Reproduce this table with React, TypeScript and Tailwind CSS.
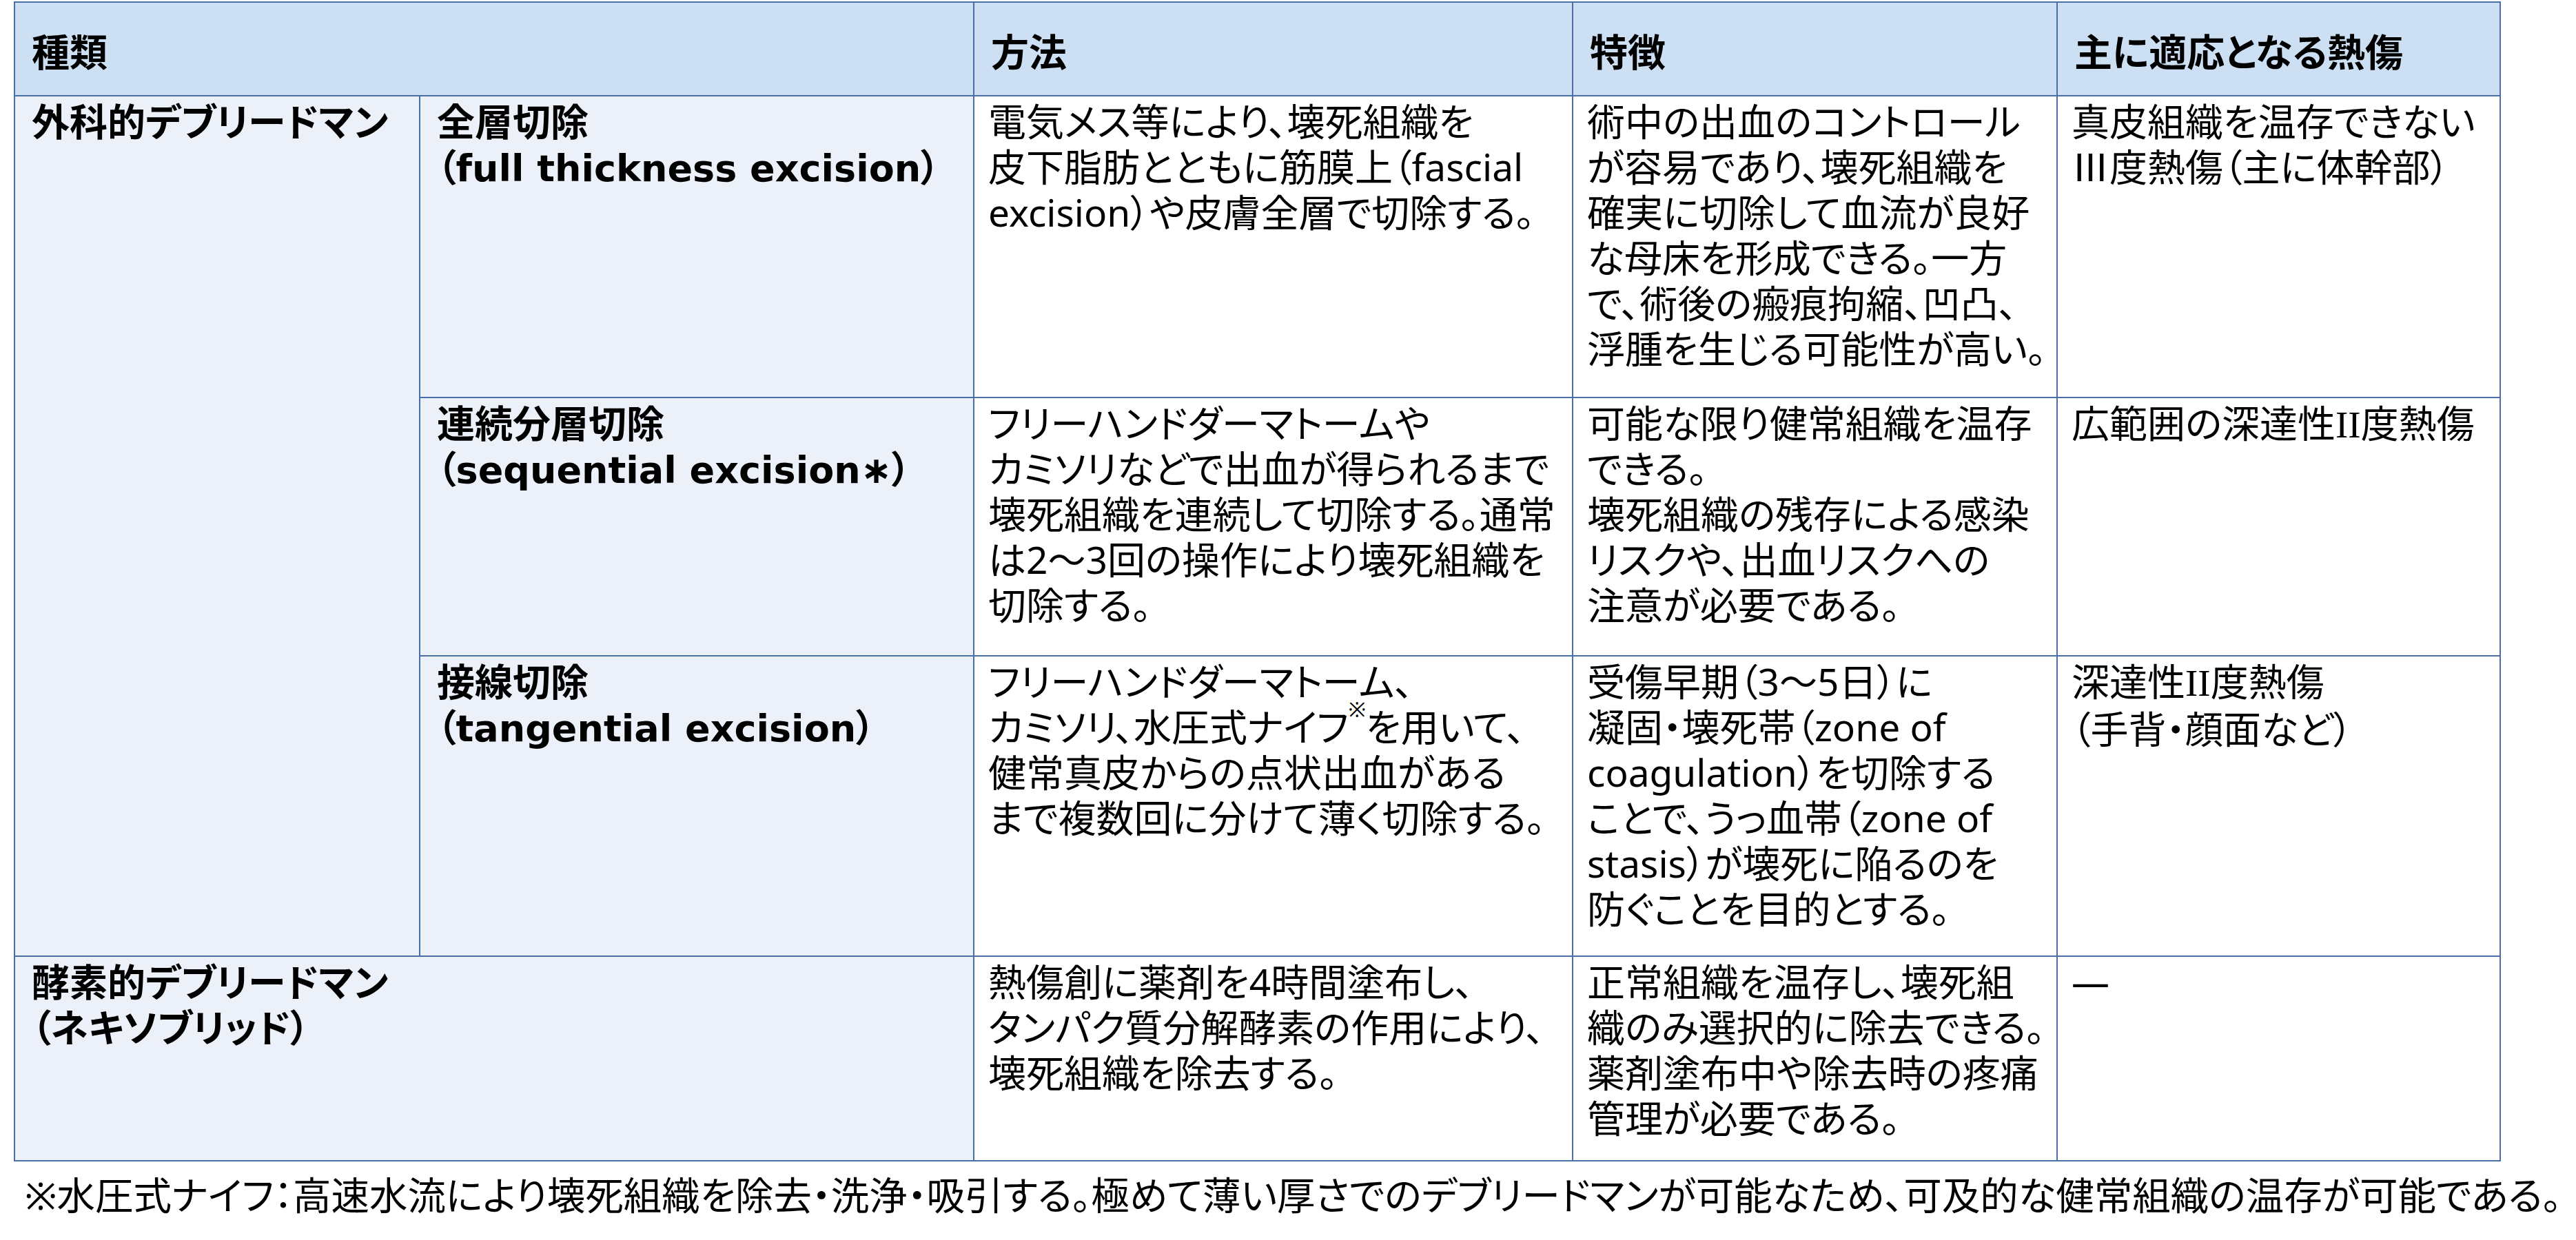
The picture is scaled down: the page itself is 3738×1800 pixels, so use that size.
import React from "react";

const B = "border-2 border-[#4a6ea8]";
const head = `${B} bg-[#cddff3] text-left align-middle font-bold pl-6 pt-[8px]`;
const side = `${B} bg-[#ebf0f9] align-top font-bold pl-6 pt-[3px]`;
const cell = `${B} bg-white align-top pl-5 pr-2 pt-[3px]`;

function Lines({ rows }: { rows: React.ReactNode[] }) {
  return (
    <>
      {rows.map((r, i) => (
        <div key={i} className="whitespace-nowrap">
          {r}
        </div>
      ))}
    </>
  );
}

const Roman2 = () => <span className="font-['Liberation_Serif',serif]">II</span>;
const Wide = ({ children }: { children: React.ReactNode }) => (
  <span className="font-['DejaVu_Sans','Noto_Sans_CJK_JP',sans-serif] text-[54px]">{children}</span>
);

export default function App() {
  return (
    <div className="w-[3738px] h-[1800px] bg-white text-black font-['Noto_Sans','Noto_Sans_CJK_JP',sans-serif] text-[55px] leading-[66px] [font-feature-settings:'palt'] pt-[2px]">
      <table className="ml-[20px] table-fixed border-collapse w-[3607px]">
        <colgroup>
          <col className="w-[588px]" />
          <col className="w-[804px]" />
          <col className="w-[869px]" />
          <col className="w-[703px]" />
          <col className="w-[643px]" />
        </colgroup>
        <thead>
          <tr className="h-[136px]">
            <th colSpan={2} className={head}>種類</th>
            <th className={head}>方法</th>
            <th className={head}>特徴</th>
            <th className={head}>主に適応となる熱傷</th>
          </tr>
        </thead>
        <tbody>
          <tr className="h-[438px]">
            <td rowSpan={3} className={side}>
              <Lines rows={["外科的デブリードマン"]} />
            </td>
            <td className={side}>
              <Lines rows={["全層切除", <>（<Wide>full thickness excision</Wide>）</>]} />
            </td>
            <td className={cell}>
              <Lines
                rows={[
                  "電気メス等により、壊死組織を",
                  "皮下脂肪とともに筋膜上（fascial",
                  "excision）や皮膚全層で切除する。",
                ]}
              />
            </td>
            <td className={cell}>
              <Lines
                rows={[
                  "術中の出血のコントロール",
                  "が容易であり、壊死組織を",
                  "確実に切除して血流が良好",
                  "な母床を形成できる。一方",
                  "で、術後の瘢痕拘縮、凹凸、",
                  "浮腫を生じる可能性が高い。",
                ]}
              />
            </td>
            <td className={cell}>
              <Lines rows={["真皮組織を温存できない", "Ⅲ度熱傷（主に体幹部）"]} />
            </td>
          </tr>
          <tr className="h-[375px]">
            <td className={side}>
              <Lines rows={["連続分層切除", <>（<Wide>sequential excision∗</Wide>）</>]} />
            </td>
            <td className={cell}>
              <Lines
                rows={[
                  "フリーハンドダーマトームや",
                  "カミソリなどで出血が得られるまで",
                  "壊死組織を連続して切除する。通常",
                  "は2～3回の操作により壊死組織を",
                  "切除する。",
                ]}
              />
            </td>
            <td className={cell}>
              <Lines
                rows={[
                  "可能な限り健常組織を温存",
                  "できる。",
                  "壊死組織の残存による感染",
                  "リスクや、出血リスクへの",
                  "注意が必要である。",
                ]}
              />
            </td>
            <td className={cell}>
              <Lines
                rows={[
                  <>
                    広範囲の深達性<Roman2 />度熱傷
                  </>,
                ]}
              />
            </td>
          </tr>
          <tr className="h-[436px]">
            <td className={side}>
              <Lines rows={["接線切除", <>（<Wide>tangential excision</Wide>）</>]} />
            </td>
            <td className={cell}>
              <Lines
                rows={[
                  "フリーハンドダーマトーム、",
                  <>
                    カミソリ、水圧式ナイフ
                    <sup className="text-[30px] align-[20px] leading-none">※</sup>
                    を用いて、
                  </>,
                  "健常真皮からの点状出血がある",
                  "まで複数回に分けて薄く切除する。",
                ]}
              />
            </td>
            <td className={cell}>
              <Lines
                rows={[
                  "受傷早期（3～5日）に",
                  "凝固・壊死帯（zone of",
                  "coagulation）を切除する",
                  "ことで、うっ血帯（zone of",
                  "stasis）が壊死に陥るのを",
                  "防ぐことを目的とする。",
                ]}
              />
            </td>
            <td className={cell}>
              <Lines
                rows={[
                  <>
                    深達性<Roman2 />度熱傷
                  </>,
                  "（手背・顔面など）",
                ]}
              />
            </td>
          </tr>
          <tr className="h-[297px]">
            <td colSpan={2} className={side}>
              <Lines rows={["酵素的デブリードマン", "（ネキソブリッド）"]} />
            </td>
            <td className={cell}>
              <Lines
                rows={[
                  "熱傷創に薬剤を4時間塗布し、",
                  "タンパク質分解酵素の作用により、",
                  "壊死組織を除去する。",
                ]}
              />
            </td>
            <td className={cell}>
              <Lines
                rows={[
                  "正常組織を温存し、壊死組",
                  "織のみ選択的に除去できる。",
                  "薬剤塗布中や除去時の疼痛",
                  "管理が必要である。",
                ]}
              />
            </td>
            <td className={cell}>
              <Lines rows={["—"]} />
            </td>
          </tr>
        </tbody>
      </table>
      <p className="ml-[36px] mt-[16px] whitespace-nowrap text-[55.5px]">
        ※水圧式ナイフ：高速水流により壊死組織を除去・洗浄・吸引する。極めて薄い厚さでのデブリードマンが可能なため、可及的な健常組織の温存が可能である。
      </p>
    </div>
  );
}
